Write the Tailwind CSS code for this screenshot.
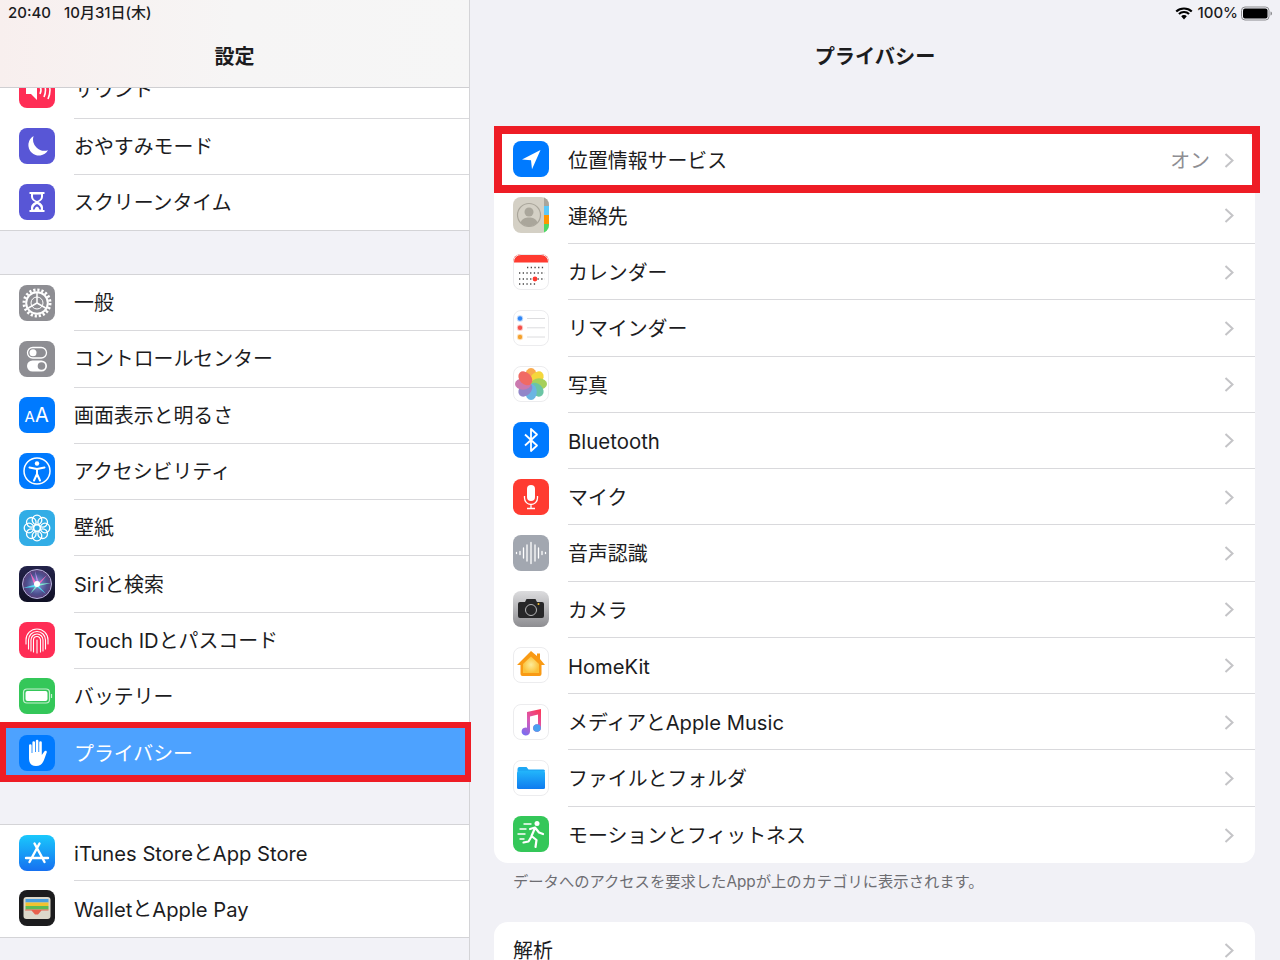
<!DOCTYPE html>
<html lang="ja">
<head>
    <meta charset="UTF-8">
    <meta name="viewport" content="width=device-width, initial-scale=1.0">
    <title>プライバシー</title>
    <script src="https://cdn.jsdelivr.net/npm/@tailwindcss/browser@4"></script>
</head>
<body class="w-[1280px] h-[960px] overflow-hidden bg-[#f1f1f6] text-[19.9px] text-[#1c1c1e] font-['Inter','Noto_Sans_CJK_JP',sans-serif]">
<div class="flex h-[960px]">

    <!-- sidebar -->
    <aside class="w-[470px] shrink-0 border-r border-[#d4d4d7] bg-[#f2f2f7]">
        <header class="relative z-10 h-[88px] border-b border-[#cfcfd2] bg-linear-to-r from-[#f8efee] via-[#f6f5f5] to-[#f6f6f6]">
            <div class="flex h-[25px] items-center gap-[13px] pt-[2px] pl-[8px] text-[15px] font-medium"><span>20:40</span><span>10月31日(木)</span></div>
            <h1 class="mt-[20px] text-center text-[20px] font-bold leading-[24px]">設定</h1>
        </header>

        <div class="-mt-[25.75px]">
            <section class="bg-white">
                <div class="flex h-[56.25px] items-center pl-[19px]">
                    <svg class="-mt-[1px] h-[36px] w-[36px] shrink-0" viewBox="0 0 36 36"><rect width="36" height="36" rx="8" fill="#ff2d55"/><path d="M7 14h5l6-6v20l-6-6H7z" fill="#fff"/><path d="M21 14q2 4 0 8M25 11q3 7 0 14M29 9q4 9 0 18" fill="none" stroke="#fff" stroke-width="1.6"/></svg>
                    <div class="ml-[19px] flex h-full flex-1 items-center border-b border-[#d9d9dc] pt-[3px]">サウンド</div>
                </div>
                <div class="flex h-[56.25px] items-center pl-[19px]">
                    <svg class="-mt-[1px] h-[36px] w-[36px] shrink-0" viewBox="0 0 36 36"><rect width="36" height="36" rx="8" fill="#5856d6"/><path d="M14.500 8a10.500 10.500 0 1 0 14.500 14.200 11.500 11.500 0 0 1-14.500-14.200z" fill="#fff"/></svg>
                    <div class="ml-[19px] flex h-full flex-1 items-center border-b border-[#d9d9dc] pt-[3px]">おやすみモード</div>
                </div>
                <div class="flex h-[56.25px] items-center border-b border-[#d4d4d7] pl-[19px]">
                    <svg class="-mt-[1px] h-[36px] w-[36px] shrink-0" viewBox="0 0 36 36"><rect width="36" height="36" rx="8" fill="#5856d6"/><path d="M10.500 8h15v2H24v2.500q0 3.500-4.500 5.500 4.500 2 4.500 5.500V26h1.500v2h-15v-2H12v-2.500q0-3.500 4.500-5.500-4.500-2-4.500-5.500V10h-1.500z" fill="#fff"/><path d="M14 10.500h8v2q0 3-4 4.500-4-1.500-4-4.500zM18 20q-4 1.500-4 5.500h1.500q1-3 2.500-3t2.500 3H22q0-4-4-5.500z" fill="#5856d6"/></svg>
                    <div class="ml-[19px] flex h-full flex-1 items-center pt-[3px]">スクリーンタイム</div>
                </div>
            </section>

            <section class="mt-[43px] border-t border-[#d4d4d7] bg-white">
                <div class="flex h-[56.25px] items-center pl-[19px]">
                    <svg class="-mt-[1px] h-[36px] w-[36px] shrink-0" viewBox="0 0 36 36"><rect width="36" height="36" rx="8" fill="#8e8e93"/><circle cx="18" cy="18" r="13" fill="none" stroke="#fff" stroke-width="3" stroke-dasharray="2.200 1.880"/><circle cx="18" cy="18" r="10.800" fill="none" stroke="#fff" stroke-width="2"/><path d="M18 18V8M18 18l-8.700 5M18 18l8.700 5" stroke="#fff" stroke-width="1.500"/><circle cx="18" cy="18" r="6" fill="none" stroke="#fff" stroke-width="1"/></svg>
                    <div class="ml-[19px] flex h-full flex-1 items-center border-b border-[#d9d9dc] pt-[3px]">一般</div>
                </div>
                <div class="flex h-[56.25px] items-center pl-[19px]">
                    <svg class="-mt-[1px] h-[36px] w-[36px] shrink-0" viewBox="0 0 36 36"><rect width="36" height="36" rx="8" fill="#8e8e93"/><rect x="8.500" y="6.500" width="19" height="10.500" rx="5.250" fill="none" stroke="#fff" stroke-width="1.300"/><circle cx="14" cy="11.800" r="3.500" fill="#fff"/><rect x="8" y="19.500" width="20" height="11" rx="5.500" fill="#fff"/><circle cx="22.500" cy="25" r="3.800" fill="#8e8e93"/></svg>
                    <div class="ml-[19px] flex h-full flex-1 items-center border-b border-[#d9d9dc] pt-[3px]">コントロールセンター</div>
                </div>
                <div class="flex h-[56.25px] items-center pl-[19px]">
                    <svg class="-mt-[1px] h-[36px] w-[36px] shrink-0" viewBox="0 0 36 36"><rect width="36" height="36" rx="8" fill="#007aff"/><text x="5.500" y="25" font-size="15" fill="#fff" font-family="Inter">A</text><text x="16" y="25" font-size="20" fill="#fff" font-family="Inter">A</text></svg>
                    <div class="ml-[19px] flex h-full flex-1 items-center border-b border-[#d9d9dc] pt-[3px]">画面表示と明るさ</div>
                </div>
                <div class="flex h-[56.25px] items-center pl-[19px]">
                    <svg class="-mt-[1px] h-[36px] w-[36px] shrink-0" viewBox="0 0 36 36"><rect width="36" height="36" rx="8" fill="#007aff"/><circle cx="18" cy="18" r="13" fill="none" stroke="#fff" stroke-width="1.500"/><circle cx="18" cy="10.500" r="2.200" fill="#fff"/><path d="M10.500 14.500l7.500 1.500 7.500-1.500M18 16v5M18 21l-3 6.500M18 21l3 6.500" fill="none" stroke="#fff" stroke-width="2" stroke-linecap="round" stroke-linejoin="round"/></svg>
                    <div class="ml-[19px] flex h-full flex-1 items-center border-b border-[#d9d9dc] pt-[3px]">アクセシビリティ</div>
                </div>
                <div class="flex h-[56.25px] items-center pl-[19px]">
                    <svg class="-mt-[1px] h-[36px] w-[36px] shrink-0" viewBox="0 0 36 36"><rect width="36" height="36" rx="8" fill="#32ade6"/><g fill="none" stroke="#fff" stroke-width="1.300"><circle cx="18" cy="18" r="3.500"/><circle cx="18" cy="10" r="4.800"/><circle cx="18" cy="26" r="4.800"/><circle cx="10" cy="18" r="4.800"/><circle cx="26" cy="18" r="4.800"/><circle cx="12.300" cy="12.300" r="4.800"/><circle cx="23.700" cy="12.300" r="4.800"/><circle cx="12.300" cy="23.700" r="4.800"/><circle cx="23.700" cy="23.700" r="4.800"/></g></svg>
                    <div class="ml-[19px] flex h-full flex-1 items-center border-b border-[#d9d9dc] pt-[3px]">壁紙</div>
                </div>
                <div class="flex h-[56.25px] items-center pl-[19px]">
                    <svg class="-mt-[1px] h-[36px] w-[36px] shrink-0" viewBox="0 0 36 36"><defs><linearGradient id="siriBg" x1="0" y1="0" x2="0" y2="1"><stop offset="0" stop-color="#23234a"/><stop offset="1" stop-color="#0f1024"/></linearGradient><radialGradient id="siriGlow"><stop offset="0" stop-color="#8a9ad8"/><stop offset=".7" stop-color="#4c4f8e"/><stop offset="1" stop-color="#5a3f78"/></radialGradient></defs><rect width="36" height="36" rx="8" fill="url(#siriBg)"/><circle cx="18" cy="18" r="14.500" fill="url(#siriGlow)"/><circle cx="18" cy="18" r="14.500" fill="none" stroke="#b9b6e0" stroke-width="1"/><path d="M18 18L11 6l3.500 11zM18 18l10-9-8 10z" fill="#f06ac0"/><path d="M18 18L4 22l13-1zM18 18l9 10-10-8z" fill="#4fd9f0"/><path d="M18 18l-7 10 8-8zM18 18l14-1-13 3z" fill="#7ff0d0"/><path d="M18 18l-2-13 4 12z" fill="#c48bf0"/><circle cx="18" cy="18" r="3" fill="#fff"/></svg>
                    <div class="ml-[19px] flex h-full flex-1 items-center border-b border-[#d9d9dc] pt-[4px]">Siriと検索</div>
                </div>
                <div class="flex h-[56.25px] items-center pl-[19px]">
                    <svg class="-mt-[1px] h-[36px] w-[36px] shrink-0" viewBox="0 0 36 36"><rect width="36" height="36" rx="8" fill="#ff2d55"/><g fill="none" stroke="#fff" stroke-width="1.100" stroke-linecap="round"><path d="M7 22v-4a11 11 0 0 1 22 0v4"/><path d="M9.500 27v-9a8.500 8.500 0 0 1 17 0v9"/><path d="M12 29V18a6 6 0 0 1 12 0v11"/><path d="M14.500 30V18a3.500 3.500 0 0 1 7 0v12"/><path d="M18 31V18"/></g></svg>
                    <div class="ml-[19px] flex h-full flex-1 items-center border-b border-[#d9d9dc] pt-[3px]"><span class="text-[20.2px]">Touch ID</span>とパスコード</div>
                </div>
                <div class="flex h-[56.25px] items-center pl-[19px]">
                    <svg class="-mt-[1px] h-[36px] w-[36px] shrink-0" viewBox="0 0 36 36"><rect width="36" height="36" rx="8" fill="#34c759"/><rect x="4.500" y="11" width="26" height="14" rx="3.500" fill="none" stroke="#c5f0d0" stroke-width="1.200"/><rect x="6.500" y="13" width="22" height="10" rx="2" fill="#fff"/><path d="M32.500 16v4" stroke="#c5f0d0" stroke-width="1.200"/></svg>
                    <div class="ml-[19px] flex h-full flex-1 items-center border-b border-[#d9d9dc] pt-[3px]">バッテリー</div>
                </div>
                <div class="relative flex h-[56.25px] items-center bg-[#4da2ff] pl-[19px] text-white">
                    <svg class="-mt-[1px] h-[36px] w-[36px] shrink-0" viewBox="0 0 36 36"><rect width="36" height="36" rx="8" fill="#007aff"/><path d="M10 10.500a1.300 1.300 0 0 1 2.600 0V18h.8V7.500a1.300 1.300 0 0 1 2.600 0V17h.8V6a1.300 1.300 0 0 1 2.600 0v11h.8V7.500a1.300 1.300 0 0 1 2.600 0V20l2.500-3.500c1.200-1.600 3.200-.4 2.300 1.200L25 25c-1.500 3.500-3.500 6-8 6-5 0-7-3-7-8z" fill="#fff"/></svg>
                    <div class="ml-[19px] flex h-full flex-1 items-center pt-[3px]">プライバシー</div>
                    <div class="absolute -top-[3px] left-0 h-[60px] w-[471px] border-[6px] border-b-[7px] border-[#ee1c25]"></div>
                </div>
            </section>

            <section class="mt-[42.75px] border-t border-[#d4d4d7] bg-white">
                <div class="flex h-[56.25px] items-center pl-[19px]">
                    <svg class="-mt-[1px] h-[36px] w-[36px] shrink-0" viewBox="0 0 36 36"><defs><linearGradient id="storeBg" x1="0" y1="0" x2="0" y2="1"><stop offset="0" stop-color="#1ac8fc"/><stop offset="1" stop-color="#1670f0"/></linearGradient></defs><rect width="36" height="36" rx="8" fill="url(#storeBg)"/><path d="M20.500 8.500L10.500 27M15.500 8.500L25.500 27M7 23h22" fill="none" stroke="#fff" stroke-width="2.400" stroke-linecap="round"/></svg>
                    <div class="ml-[19px] flex h-full flex-1 items-center border-b border-[#d9d9dc] pt-[3px]"><span class="text-[20.2px]">iTunes Store</span>と<span class="text-[20.2px]">App Store</span></div>
                </div>
                <div class="flex h-[56.25px] items-center border-b border-[#d4d4d7] pl-[19px]">
                    <svg class="-mt-[1px] h-[36px] w-[36px] shrink-0" viewBox="0 0 36 36"><rect width="36" height="36" rx="8" fill="#1c1c1e"/><rect x="4.500" y="7" width="27" height="22" rx="3" fill="#dcd8ca"/><rect x="6.500" y="9" width="23" height="3.500" fill="#4a9fe0"/><rect x="6.500" y="12.500" width="23" height="3.500" fill="#f2c230"/><rect x="6.500" y="16" width="23" height="3.500" fill="#5dbb56"/><path d="M6.500 19.500h23v1h-7l-3.500 4h-3l-3.500-4h-6.500z" fill="#e8604c"/></svg>
                    <div class="ml-[19px] flex h-full flex-1 items-center pt-[3px]"><span class="text-[20.2px]">Wallet</span>と<span class="text-[20.2px]">Apple Pay</span></div>
                </div>
            </section>
        </div>
    </aside>

    <!-- detail pane -->
    <main class="flex-1">
        <header class="relative h-[88px]">
            <div class="flex h-[25px] items-center justify-end pt-[1px] pr-[8px] text-[15px] font-medium">
                <svg class="h-[13px] w-[18px]" viewBox="0 0 18 13"><path d="M9 2.500a10 10 0 0 1 7 2.800L17.500 3.800A12.500 12.500 0 0 0 9 .5 12.500 12.500 0 0 0 .5 3.800L2 5.300a10 10 0 0 1 7-2.800z" fill="#000"/><path d="M9 6a6 6 0 0 1 4.300 1.700l1.500-1.500A8.300 8.300 0 0 0 9 4a8.300 8.300 0 0 0-5.800 2.200l1.500 1.500A6 6 0 0 1 9 6z" fill="#000"/><path d="M9 8a3.500 3.500 0 0 0-2.800 1.200L9 12.500l2.800-3.300A3.500 3.500 0 0 0 9 8z" fill="#000"/></svg>
                <span class="ml-[5px]">100%</span>
                <svg class="ml-[3px] h-[15px] w-[31px]" viewBox="0 0 31 15"><rect x=".5" y="1" width="27.500" height="13" rx="3.500" fill="none" stroke="#8a8a8d"/><rect x="2" y="2.500" width="24.500" height="10" rx="2" fill="#000"/><path d="M29.500 5.500c1 .3 1.500 1 1.500 2s-.5 1.700-1.500 2z" fill="#8a8a8d"/></svg>
            </div>
            <h2 class="mt-[20px] text-center text-[20.2px] font-bold leading-[24px]">プライバシー</h2>
        </header>

        <div class="mt-[43.5px] ml-[24px] mr-[25px]">
            <section class="rounded-[14px] bg-white">
                <div class="relative flex h-[56.25px] items-center pl-[19px]">
                    <svg class="-mt-[1px] h-[36px] w-[36px] shrink-0" viewBox="0 0 36 36"><rect width="36" height="36" rx="8" fill="#007aff"/><path d="M27.500 9L9 18.500l9 .8 1 9z" fill="#fff"/></svg>
                    <div class="ml-[19px] flex h-full flex-1 items-center justify-between pt-[5px] pr-[21px]">位置情報サービス<div class="flex items-center gap-[14px] text-[#8e8e93]">オン<svg class="-mt-[4px] h-[15px] w-[10px]" viewBox="0 0 10 15"><path d="M1.500 1l7 6.500-7 6.500" fill="none" stroke="#c4c4c7" stroke-width="2"/></svg></div></div>
                    <div class="absolute -top-[5.5px] left-0 h-[67px] w-[766px] border-[8px] border-[#ee1c25]"></div>
                </div>
                <div class="flex h-[56.25px] items-center pl-[19px]">
                    <svg class="-mt-[1px] h-[36px] w-[36px] shrink-0" viewBox="0 0 36 36"><defs><clipPath id="contactClip"><rect width="36" height="36" rx="8"/></clipPath></defs><g clip-path="url(#contactClip)"><rect width="36" height="36" fill="#d4d0c5"/><rect x="31" width="5" height="9" fill="#a9a59b"/><rect x="31" y="9" width="5" height="9" fill="#5ac8fa"/><rect x="31" y="18" width="5" height="9" fill="#ff9500"/><rect x="31" y="27" width="5" height="9" fill="#4cd964"/><circle cx="16" cy="18" r="11.500" fill="none" stroke="#aaa69b" stroke-width="1.200"/><circle cx="16" cy="15" r="4.500" fill="#aaa69b"/><path d="M7.500 25.500c1.500-4 5-5 8.500-5s7 1 8.500 5a11.500 11.500 0 0 1-17 0z" fill="#aaa69b"/></g></svg>
                    <div class="ml-[19px] flex h-full flex-1 items-center justify-between border-b border-[#d9d9dc] pt-[5px] pr-[21px]">連絡先<svg class="-mt-[4px] h-[15px] w-[10px]" viewBox="0 0 10 15"><path d="M1.500 1l7 6.500-7 6.500" fill="none" stroke="#c4c4c7" stroke-width="2"/></svg></div>
                </div>
                <div class="flex h-[56.25px] items-center pl-[19px]">
                    <svg class="-mt-[1px] h-[36px] w-[36px] shrink-0" viewBox="0 0 36 36"><defs><clipPath id="calClip"><rect width="36" height="36" rx="8"/></clipPath></defs><g clip-path="url(#calClip)"><rect width="36" height="36" fill="#fff"/><rect width="36" height="8.500" fill="#ff3b30"/></g><rect x=".5" y=".5" width="35" height="35" rx="7.500" fill="none" stroke="#ececee"/><path d="M14 13.500h18M6 19h26M6 25h26M6 30h18" stroke="#444" stroke-width="1.300" stroke-dasharray="1.300 2.400"/><circle cx="22" cy="25" r="2.400" fill="#ff3b30"/></svg>
                    <div class="ml-[19px] flex h-full flex-1 items-center justify-between border-b border-[#d9d9dc] pt-[5px] pr-[21px]">カレンダー<svg class="-mt-[4px] h-[15px] w-[10px]" viewBox="0 0 10 15"><path d="M1.500 1l7 6.500-7 6.500" fill="none" stroke="#c4c4c7" stroke-width="2"/></svg></div>
                </div>
                <div class="flex h-[56.25px] items-center pl-[19px]">
                    <svg class="-mt-[1px] h-[36px] w-[36px] shrink-0" viewBox="0 0 36 36"><rect x=".5" y=".5" width="35" height="35" rx="7.500" fill="#fff" stroke="#ececee"/><circle cx="7" cy="8.500" r="3.200" fill="#2f86f6" fill-opacity=".3"/><circle cx="7" cy="8.500" r="2.200" fill="#2f86f6"/><circle cx="7" cy="17.800" r="3.200" fill="#f5514a" fill-opacity=".3"/><circle cx="7" cy="17.800" r="2.200" fill="#f5514a"/><circle cx="7" cy="27" r="3.200" fill="#f5a12e" fill-opacity=".3"/><circle cx="7" cy="27" r="2.200" fill="#f5a12e"/><path d="M14 8.500H32M14 17.800H32M14 27H32" stroke="#dcdcde" stroke-width="1"/></svg>
                    <div class="ml-[19px] flex h-full flex-1 items-center justify-between border-b border-[#d9d9dc] pt-[5px] pr-[21px]">リマインダー<svg class="-mt-[4px] h-[15px] w-[10px]" viewBox="0 0 10 15"><path d="M1.500 1l7 6.500-7 6.500" fill="none" stroke="#c4c4c7" stroke-width="2"/></svg></div>
                </div>
                <div class="flex h-[56.25px] items-center pl-[19px]">
                    <svg class="-mt-[1px] h-[36px] w-[36px] shrink-0" viewBox="0 0 36 36"><rect x=".5" y=".5" width="35" height="35" rx="7.500" fill="#fff" stroke="#ececee"/><g opacity=".9"><ellipse cx="18" cy="10" rx="5.800" ry="8" fill="#f9a13a"/><ellipse cx="18" cy="10" rx="5.800" ry="8" fill="#f5d328" transform="rotate(45 18 18)"/><ellipse cx="18" cy="10" rx="5.800" ry="8" fill="#9dcc4a" transform="rotate(90 18 18)"/><ellipse cx="18" cy="10" rx="5.800" ry="8" fill="#5cbf9b" transform="rotate(135 18 18)"/><ellipse cx="18" cy="10" rx="5.800" ry="8" fill="#5aaee0" transform="rotate(180 18 18)"/><ellipse cx="18" cy="10" rx="5.800" ry="8" fill="#8679c4" transform="rotate(225 18 18)"/><ellipse cx="18" cy="10" rx="5.800" ry="8" fill="#c66ba7" transform="rotate(270 18 18)"/><ellipse cx="18" cy="10" rx="5.800" ry="8" fill="#ef5a54" transform="rotate(315 18 18)"/></g></svg>
                    <div class="ml-[19px] flex h-full flex-1 items-center justify-between border-b border-[#d9d9dc] pt-[5px] pr-[21px]">写真<svg class="-mt-[4px] h-[15px] w-[10px]" viewBox="0 0 10 15"><path d="M1.500 1l7 6.500-7 6.500" fill="none" stroke="#c4c4c7" stroke-width="2"/></svg></div>
                </div>
                <div class="flex h-[56.25px] items-center pl-[19px]">
                    <svg class="-mt-[1px] h-[36px] w-[36px] shrink-0" viewBox="0 0 36 36"><rect width="36" height="36" rx="8" fill="#007aff"/><path d="M12 12.500l12 11-6 5.500V7l6 5.500-12 11" fill="none" stroke="#fff" stroke-width="1.800" stroke-linejoin="round"/></svg>
                    <div class="ml-[19px] flex h-full flex-1 items-center justify-between border-b border-[#d9d9dc] pt-[3px] pr-[21px]"><span class="text-[20.4px]">Bluetooth</span><svg class="-mt-[2px] h-[15px] w-[10px]" viewBox="0 0 10 15"><path d="M1.500 1l7 6.500-7 6.500" fill="none" stroke="#c4c4c7" stroke-width="2"/></svg></div>
                </div>
                <div class="flex h-[56.25px] items-center pl-[19px]">
                    <svg class="-mt-[1px] h-[36px] w-[36px] shrink-0" viewBox="0 0 36 36"><rect width="36" height="36" rx="8" fill="#ff3b30"/><rect x="14" y="6" width="8" height="16" rx="4" fill="#fff"/><path d="M11.500 17v2a6.500 6.500 0 0 0 13 0v-2M18 25.500V29M14 29.500h8" fill="none" stroke="#fff" stroke-width="1.300"/></svg>
                    <div class="ml-[19px] flex h-full flex-1 items-center justify-between border-b border-[#d9d9dc] pt-[5px] pr-[21px]">マイク<svg class="-mt-[4px] h-[15px] w-[10px]" viewBox="0 0 10 15"><path d="M1.500 1l7 6.500-7 6.500" fill="none" stroke="#c4c4c7" stroke-width="2"/></svg></div>
                </div>
                <div class="flex h-[56.25px] items-center pl-[19px]">
                    <svg class="-mt-[1px] h-[36px] w-[36px] shrink-0" viewBox="0 0 36 36"><rect width="36" height="36" rx="8" fill="#a2a7b0"/><path d="M3.500 17.500v1M7 16.500v3M10.500 13v10M14 10v16M18 7.500v21M22 10v16M25.500 13v10M29 16.500v3M32.500 17.500v1" stroke="#fff" stroke-width="1.300" stroke-linecap="round"/></svg>
                    <div class="ml-[19px] flex h-full flex-1 items-center justify-between border-b border-[#d9d9dc] pt-[5px] pr-[21px]">音声認識<svg class="-mt-[4px] h-[15px] w-[10px]" viewBox="0 0 10 15"><path d="M1.500 1l7 6.500-7 6.500" fill="none" stroke="#c4c4c7" stroke-width="2"/></svg></div>
                </div>
                <div class="flex h-[56.25px] items-center pl-[19px]">
                    <svg class="-mt-[1px] h-[36px] w-[36px] shrink-0" viewBox="0 0 36 36"><defs><linearGradient id="camBg" x1="0" y1="0" x2="0" y2="1"><stop offset="0" stop-color="#dcdcde"/><stop offset="1" stop-color="#8d8d91"/></linearGradient></defs><rect width="36" height="36" rx="8" fill="url(#camBg)"/><path d="M7 11h5l1.500-3h9l1.500 3h5a2 2 0 0 1 2 2v12a2 2 0 0 1-2 2H7a2 2 0 0 1-2-2V13a2 2 0 0 1 2-2z" fill="#262628"/><circle cx="18" cy="19" r="5.500" fill="none" stroke="#b6b6b8" stroke-width="1"/><circle cx="25.500" cy="13" r="1" fill="#f5c131"/></svg>
                    <div class="ml-[19px] flex h-full flex-1 items-center justify-between border-b border-[#d9d9dc] pt-[5px] pr-[21px]">カメラ<svg class="-mt-[4px] h-[15px] w-[10px]" viewBox="0 0 10 15"><path d="M1.500 1l7 6.500-7 6.500" fill="none" stroke="#c4c4c7" stroke-width="2"/></svg></div>
                </div>
                <div class="flex h-[56.25px] items-center pl-[19px]">
                    <svg class="-mt-[1px] h-[36px] w-[36px] shrink-0" viewBox="0 0 36 36"><defs><radialGradient id="homeGlow"><stop offset="0" stop-color="#fdec9a"/><stop offset="1" stop-color="#fbc13a"/></radialGradient></defs><rect x=".5" y=".5" width="35" height="35" rx="7.500" fill="#fff" stroke="#ececee"/><path d="M18 4l6 5V6.500h3V12l5 6h-3.500v9a2 2 0 0 1-2 2h-17a2 2 0 0 1-2-2v-9H4z" fill="#f99a14"/><path d="M18 9.500l8 7.500v9H10v-9z" fill="url(#homeGlow)"/></svg>
                    <div class="ml-[19px] flex h-full flex-1 items-center justify-between border-b border-[#d9d9dc] pt-[3px] pr-[21px]"><span class="text-[20.2px]">HomeKit</span><svg class="-mt-[2px] h-[15px] w-[10px]" viewBox="0 0 10 15"><path d="M1.500 1l7 6.500-7 6.500" fill="none" stroke="#c4c4c7" stroke-width="2"/></svg></div>
                </div>
                <div class="flex h-[56.25px] items-center pl-[19px]">
                    <svg class="-mt-[1px] h-[36px] w-[36px] shrink-0" viewBox="0 0 36 36"><defs><linearGradient id="noteFill" x1=".8" y1="0" x2=".2" y2="1"><stop offset="0" stop-color="#fb3a5c"/><stop offset=".5" stop-color="#d85bb8"/><stop offset="1" stop-color="#7a6cf0"/></linearGradient></defs><rect x=".5" y=".5" width="35" height="35" rx="7.500" fill="#fff" stroke="#ececee"/><path d="M14 8l14-3v19a4 3.800 0 1 1-3-3.600V10.500l-8 2V27.500a4.200 4 0 1 1-3-3.800z" fill="url(#noteFill)"/><circle cx="24" cy="24" r="3.800" fill="#4aa0f0"/></svg>
                    <div class="ml-[19px] flex h-full flex-1 items-center justify-between border-b border-[#d9d9dc] pt-[3px] pr-[21px]"><span>メディアと<span class="text-[20.2px]">Apple Music</span></span><svg class="-mt-[2px] h-[15px] w-[10px]" viewBox="0 0 10 15"><path d="M1.500 1l7 6.500-7 6.500" fill="none" stroke="#c4c4c7" stroke-width="2"/></svg></div>
                </div>
                <div class="flex h-[56.25px] items-center pl-[19px]">
                    <svg class="-mt-[1px] h-[36px] w-[36px] shrink-0" viewBox="0 0 36 36"><defs><linearGradient id="folderFill" x1="0" y1="0" x2="0" y2="1"><stop offset="0" stop-color="#22b5fb"/><stop offset="1" stop-color="#0f7bef"/></linearGradient></defs><rect x=".5" y=".5" width="35" height="35" rx="7.500" fill="#fff" stroke="#ececee"/><path d="M4.500 9a2 2 0 0 1 2-2h7l2 2.500h15a1.500 1.500 0 0 1 1.500 1.500v.500H4.500z" fill="#1ea8f5"/><rect x="4" y="11" width="28" height="18" rx="1.500" fill="url(#folderFill)"/></svg>
                    <div class="ml-[19px] flex h-full flex-1 items-center justify-between border-b border-[#d9d9dc] pt-[5px] pr-[21px]">ファイルとフォルダ<svg class="-mt-[4px] h-[15px] w-[10px]" viewBox="0 0 10 15"><path d="M1.500 1l7 6.500-7 6.500" fill="none" stroke="#c4c4c7" stroke-width="2"/></svg></div>
                </div>
                <div class="flex h-[56.25px] items-center pl-[19px]">
                    <svg class="-mt-[1px] h-[36px] w-[36px] shrink-0" viewBox="0 0 36 36"><rect width="36" height="36" rx="8" fill="#34c759"/><circle cx="24" cy="7.500" r="2.500" fill="#fff"/><path d="M17 13l5-1.500 4 5 4 1.500M22 12l-3.500 8 5 4-1 7M18.500 20.500l-3 5-5 1" fill="none" stroke="#fff" stroke-width="2.200" stroke-linecap="round" stroke-linejoin="round"/><path d="M11 8h7M7 13h6M5 18h7M7 23h4" stroke="#fff" stroke-width="1.400" stroke-linecap="round"/></svg>
                    <div class="ml-[19px] flex h-full flex-1 items-center justify-between pt-[5px] pr-[21px]">モーションとフィットネス<svg class="-mt-[4px] h-[15px] w-[10px]" viewBox="0 0 10 15"><path d="M1.500 1l7 6.500-7 6.500" fill="none" stroke="#c4c4c7" stroke-width="2"/></svg></div>
                </div>
            </section>

            <p class="mt-[9px] pl-[19px] text-[15.3px] leading-[20px] text-[#6d6d72]">データへのアクセスを要求したAppが上のカテゴリに表示されます。</p>

            <section class="mt-[30px] rounded-[14px] bg-white">
                <div class="flex h-[56.25px] items-center justify-between pt-[5px] pl-[19px] pr-[21px]">解析<svg class="-mt-[4px] h-[15px] w-[10px]" viewBox="0 0 10 15"><path d="M1.500 1l7 6.500-7 6.500" fill="none" stroke="#c4c4c7" stroke-width="2"/></svg></div>
            </section>
        </div>
    </main>
</div>
</body>
</html>
